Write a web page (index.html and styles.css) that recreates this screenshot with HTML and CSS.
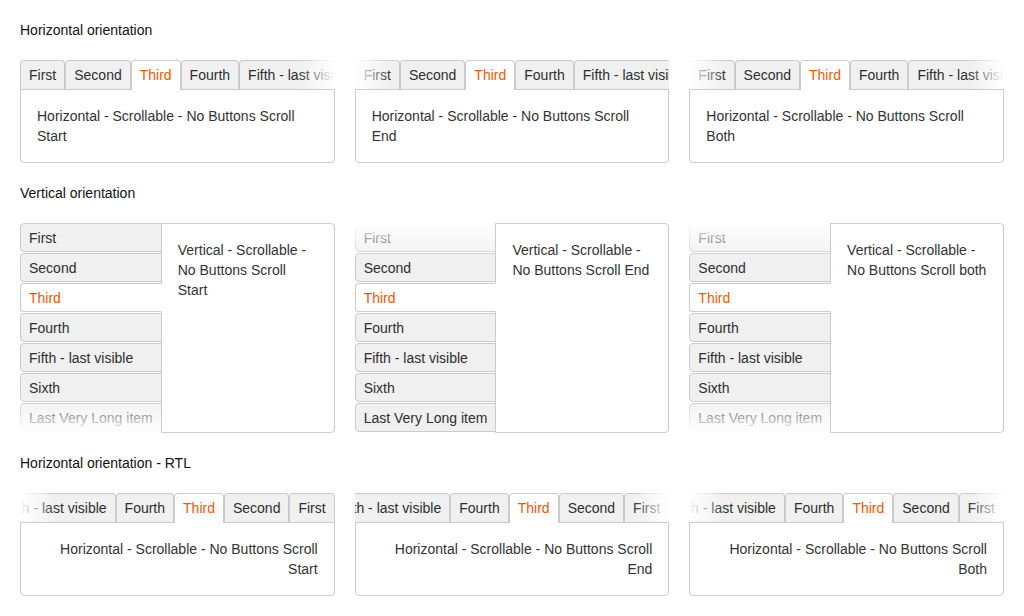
FILE: index.html
```html
<!DOCTYPE html>
<html lang="en">
<head>
<meta charset="utf-8">
<title>TabStrip scrollable</title>
<link rel="stylesheet" href="styles.css">
</head>
<body>
<main class="page">
  <h2 class="group-title">Horizontal orientation</h2>
  <div class="row">
    <div class="tabstrip tabstrip-h">
      <div class="tabs-wrap fade-end">
        <ul class="tabs">
          <li class="tab">First</li><li class="tab">Second</li><li class="tab active">Third</li><li class="tab">Fourth</li><li class="tab">Fifth - last visible</li><li class="tab">Sixth</li><li class="tab">Last Very Long item</li>
        </ul>
      </div>
      <div class="tab-content">Horizontal - Scrollable - No Buttons Scroll Start</div>
    </div>
    <div class="tabstrip tabstrip-h">
      <div class="tabs-wrap fade-start">
        <ul class="tabs">
          <li class="tab">First</li><li class="tab">Second</li><li class="tab active">Third</li><li class="tab">Fourth</li><li class="tab">Fifth - last visible</li><li class="tab">Sixth</li><li class="tab">Last Very Long item</li>
        </ul>
      </div>
      <div class="tab-content">Horizontal - Scrollable - No Buttons Scroll End</div>
    </div>
    <div class="tabstrip tabstrip-h">
      <div class="tabs-wrap fade-start fade-end">
        <ul class="tabs">
          <li class="tab">First</li><li class="tab">Second</li><li class="tab active">Third</li><li class="tab">Fourth</li><li class="tab">Fifth - last visible</li><li class="tab">Sixth</li><li class="tab">Last Very Long item</li>
        </ul>
      </div>
      <div class="tab-content">Horizontal - Scrollable - No Buttons Scroll Both</div>
    </div>
  </div>

  <h2 class="group-title">Vertical orientation</h2>
  <div class="row">
    <div class="tabstrip tabstrip-v">
      <div class="tabs-wrap fade-end">
        <ul class="tabs">
          <li class="tab">First</li><li class="tab">Second</li><li class="tab active">Third</li><li class="tab">Fourth</li><li class="tab">Fifth - last visible</li><li class="tab">Sixth</li><li class="tab">Last Very Long item</li>
        </ul>
      </div>
      <div class="tab-content">Vertical - Scrollable - No Buttons Scroll Start</div>
    </div>
    <div class="tabstrip tabstrip-v">
      <div class="tabs-wrap fade-start">
        <ul class="tabs">
          <li class="tab">First</li><li class="tab">Second</li><li class="tab active">Third</li><li class="tab">Fourth</li><li class="tab">Fifth - last visible</li><li class="tab">Sixth</li><li class="tab">Last Very Long item</li>
        </ul>
      </div>
      <div class="tab-content">Vertical - Scrollable - No Buttons Scroll End</div>
    </div>
    <div class="tabstrip tabstrip-v">
      <div class="tabs-wrap fade-start fade-end">
        <ul class="tabs">
          <li class="tab">First</li><li class="tab">Second</li><li class="tab active">Third</li><li class="tab">Fourth</li><li class="tab">Fifth - last visible</li><li class="tab">Sixth</li><li class="tab">Last Very Long item</li>
        </ul>
      </div>
      <div class="tab-content">Vertical - Scrollable - No Buttons Scroll both</div>
    </div>
  </div>

  <h2 class="group-title">Horizontal orientation - RTL</h2>
  <div class="row">
    <div class="tabstrip tabstrip-h" dir="rtl">
      <div class="tabs-wrap fade-end">
        <ul class="tabs">
          <li class="tab">First</li><li class="tab">Second</li><li class="tab active">Third</li><li class="tab">Fourth</li><li class="tab">Fifth - last visible</li><li class="tab">Sixth</li><li class="tab">Last Very Long item</li>
        </ul>
      </div>
      <div class="tab-content">Horizontal - Scrollable - No Buttons Scroll Start</div>
    </div>
    <div class="tabstrip tabstrip-h" dir="rtl">
      <div class="tabs-wrap fade-start">
        <ul class="tabs">
          <li class="tab">First</li><li class="tab">Second</li><li class="tab active">Third</li><li class="tab">Fourth</li><li class="tab">Fifth - last visible</li><li class="tab">Sixth</li><li class="tab">Last Very Long item</li>
        </ul>
      </div>
      <div class="tab-content">Horizontal - Scrollable - No Buttons Scroll End</div>
    </div>
    <div class="tabstrip tabstrip-h" dir="rtl">
      <div class="tabs-wrap fade-start fade-end">
        <ul class="tabs">
          <li class="tab">First</li><li class="tab">Second</li><li class="tab active">Third</li><li class="tab">Fourth</li><li class="tab">Fifth - last visible</li><li class="tab">Sixth</li><li class="tab">Last Very Long item</li>
        </ul>
      </div>
      <div class="tab-content">Horizontal - Scrollable - No Buttons Scroll Both</div>
    </div>
  </div>
</main>
</body>
</html>
```
FILE: styles.css
```css
* { box-sizing: border-box; }

html, body {
  margin: 0;
  background: #ffffff;
}

body {
  font-family: "Liberation Sans", Arial, sans-serif;
  font-size: 14px;
  line-height: 20px;
  color: #333333;
}

.page {
  padding: 20px;
  display: flex;
  flex-direction: column;
  gap: 20px;
}

.group-title {
  margin: 0;
  font-size: 14px;
  font-weight: normal;
  line-height: 20px;
  color: #111111;
}

.row {
  display: grid;
  grid-template-columns: repeat(3, minmax(0, 1fr));
  gap: 20px;
}

.tabstrip { min-width: 0; }

.tabs {
  list-style: none;
  margin: 0;
  padding: 0;
  display: flex;
}

.tab {
  flex-shrink: 0;
  white-space: nowrap;
  background: #f0f0f0;
  border: 1px solid #cbcbcb;
  color: #2e2e2e;
  cursor: pointer;
}

.tab.active {
  background: #ffffff;
  color: #f35800;
}

.tab-content {
  border: 1px solid #cbcbcb;
  background: #ffffff;
  padding: 16px;
  color: #333333;
}

.tabs-wrap {
  position: relative;
  overflow: hidden;
  z-index: 1;
}

.tabs-wrap::before,
.tabs-wrap::after {
  position: absolute;
  pointer-events: none;
  z-index: 2;
}

/* Horizontal */
.tabstrip-h {
  display: flex;
  flex-direction: column;
}

.tabstrip-h .tabs-wrap { height: 30px; }

.tabstrip-h .tabs { align-items: flex-start; }

.tabstrip-h .tab {
  border-bottom: 0;
  border-radius: 4px 4px 0 0;
  padding: 4px 8px;
  height: 29px;
}

.tabstrip-h .tab.active {
  height: 30px;
  padding-bottom: 5px;
}

.tabstrip-h .tab-content {
  margin-top: -1px;
  border-radius: 0 0 4px 4px;
}

.tabstrip-h .fade-start::before,
.tabstrip-h .fade-end::after {
  content: "";
  top: 0;
  bottom: 1px;
  width: 36px;
}

.tabstrip-h .fade-start::before {
  left: 0;
  background: linear-gradient(to right, #ffffff, rgba(255, 255, 255, 0));
}

.tabstrip-h .fade-end::after {
  right: 0;
  background: linear-gradient(to left, #ffffff, rgba(255, 255, 255, 0));
}

.tabstrip-h[dir="rtl"] .fade-start::before {
  left: auto;
  right: 0;
  background: linear-gradient(to left, #ffffff, rgba(255, 255, 255, 0));
}

.tabstrip-h[dir="rtl"] .fade-end::after {
  right: auto;
  left: 0;
  background: linear-gradient(to right, #ffffff, rgba(255, 255, 255, 0));
}

/* Vertical */
.tabstrip-v {
  display: flex;
  height: 210px;
}

.tabstrip-v .tabs-wrap {
  flex-shrink: 0;
  margin-right: -1px;
}

.tabstrip-v .tabs { flex-direction: column; }

.tabstrip-v .tab {
  border-radius: 4px 0 0 4px;
  padding: 4px 8px 3px;
  height: 29px;
  margin-bottom: 1px;
}

.tabstrip-v .tab.active { border-right-color: #ffffff; }

.tabstrip-v .tab-content {
  flex: 1;
  min-width: 0;
  border-radius: 0 4px 4px 0;
}

.tabstrip-v .fade-start::before,
.tabstrip-v .fade-end::after {
  content: "";
  left: 0;
  right: 1px;
  height: 36px;
}

.tabstrip-v .fade-start::before {
  top: 0;
  background: linear-gradient(to bottom, #ffffff, rgba(255, 255, 255, 0));
}

.tabstrip-v .fade-end::after {
  bottom: 0;
  background: linear-gradient(to top, #ffffff, rgba(255, 255, 255, 0));
}
```
